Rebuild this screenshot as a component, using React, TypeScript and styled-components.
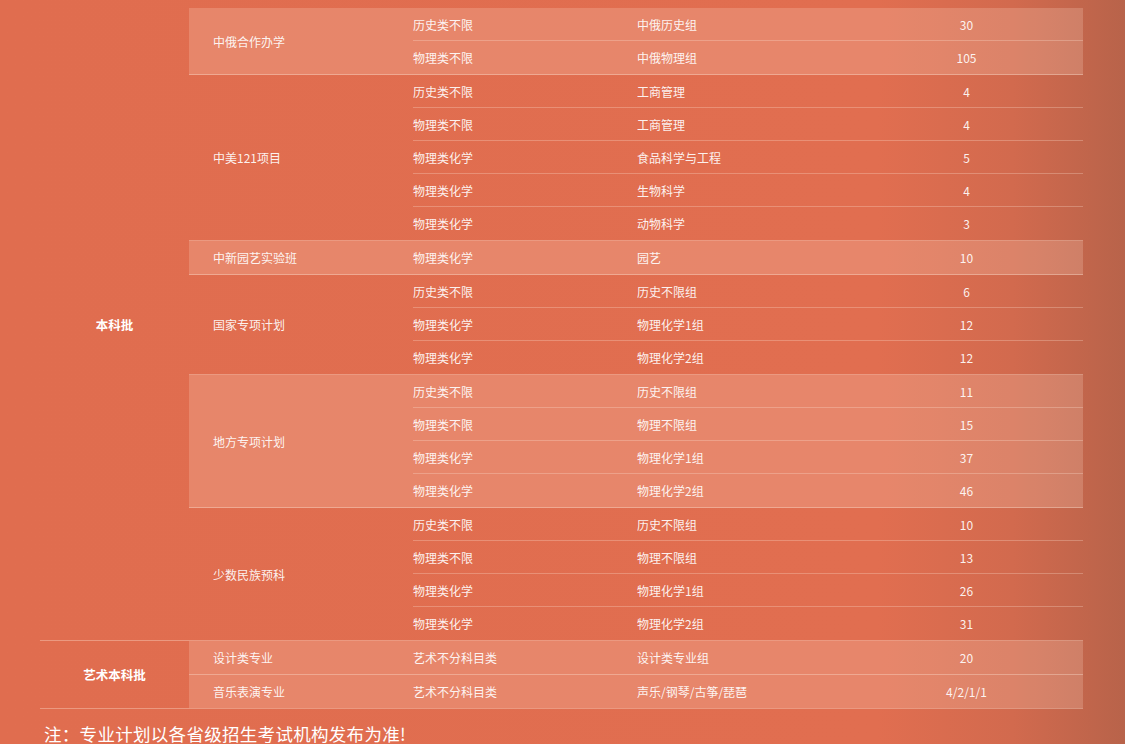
import React from 'react';
import styled, { createGlobalStyle } from 'styled-components';

const GlobalStyle = createGlobalStyle`
  html, body {
    margin: 0;
    height: 744px;
    overflow: hidden;
    background: linear-gradient(90deg, #e06d4f 0%, #e16e50 78%, #d26a4e 90%, #b8634a 100%);
    font-family: "Noto Sans CJK SC", "Noto Sans", sans-serif;
  }
`;

const Page = styled.div`
  padding: 8px 42px 0 40px;
`;

const Table = styled.div`
  width: 1043px;
`;

const Batch = styled.div`
  display: flex;
  border-bottom: 1px solid rgba(255, 235, 220, 0.35);
`;

const BatchLabel = styled.div`
  width: 149px;
  flex-shrink: 0;
  display: flex;
  align-items: center;
  justify-content: center;
  color: #fff;
  font-weight: 700;
  font-size: 12.5px;
`;

const Groups = styled.div`
  flex: 1;
  display: flex;
  flex-direction: column;
`;

const Group = styled.div<{ $hl?: boolean; $last?: boolean }>`
  display: flex;
  background: ${(p) => (p.$hl ? 'rgba(255, 225, 205, 0.22)' : 'transparent')};
  border-bottom: ${(p) => (p.$last ? 'none' : '1px solid rgba(255, 235, 220, 0.35)')};
`;

const Category = styled.div`
  width: 224px;
  flex-shrink: 0;
  padding-left: 24px;
  box-sizing: border-box;
  display: flex;
  align-items: center;
  color: rgba(255, 255, 255, 0.92);
  font-size: 12px;
`;

const Rows = styled.div`
  flex: 1;
  display: flex;
  flex-direction: column;
`;

const Row = styled.div<{ $last?: boolean }>`
  display: flex;
  height: ${(p) => (p.$last ? '33px' : '32px')};
  align-items: center;
  border-bottom: ${(p) => (p.$last ? 'none' : '1px solid rgba(255, 235, 220, 0.28)')};
  color: rgba(255, 255, 255, 0.92);
  font-size: 12px;
`;

const Cell = styled.div<{ $w: number; $center?: boolean }>`
  width: ${(p) => p.$w}px;
  flex-shrink: 0;
  text-align: ${(p) => (p.$center ? 'center' : 'left')};
`;

const Note = styled.div`
  margin-top: 12px;
  padding-left: 4px;
  color: #fff;
  font-size: 17.5px;
  letter-spacing: 0.3px;
`;

type R = [string, string, string];
type G = { name: string; hl?: boolean; rows: R[] };
type B = { label: string; groups: G[] };

const data: B[] = [
  {
    label: '本科批',
    groups: [
      { name: '中俄合作办学', hl: true, rows: [['历史类不限', '中俄历史组', '30'], ['物理类不限', '中俄物理组', '105']] },
      {
        name: '中美121项目',
        rows: [
          ['历史类不限', '工商管理', '4'],
          ['物理类不限', '工商管理', '4'],
          ['物理类化学', '食品科学与工程', '5'],
          ['物理类化学', '生物科学', '4'],
          ['物理类化学', '动物科学', '3'],
        ],
      },
      { name: '中新园艺实验班', hl: true, rows: [['物理类化学', '园艺', '10']] },
      {
        name: '国家专项计划',
        rows: [
          ['历史类不限', '历史不限组', '6'],
          ['物理类化学', '物理化学1组', '12'],
          ['物理类化学', '物理化学2组', '12'],
        ],
      },
      {
        name: '地方专项计划',
        hl: true,
        rows: [
          ['历史类不限', '历史不限组', '11'],
          ['物理类不限', '物理不限组', '15'],
          ['物理类化学', '物理化学1组', '37'],
          ['物理类化学', '物理化学2组', '46'],
        ],
      },
      {
        name: '少数民族预科',
        rows: [
          ['历史类不限', '历史不限组', '10'],
          ['物理类不限', '物理不限组', '13'],
          ['物理类化学', '物理化学1组', '26'],
          ['物理类化学', '物理化学2组', '31'],
        ],
      },
    ],
  },
  {
    label: '艺术本科批',
    groups: [
      { name: '设计类专业', hl: true, rows: [['艺术不分科目类', '设计类专业组', '20']] },
      { name: '音乐表演专业', hl: true, rows: [['艺术不分科目类', '声乐/钢琴/古筝/琵琶', '4/2/1/1']] },
    ],
  },
];

export default function App() {
  return (
    <Page>
      <GlobalStyle />
      <Table>
        {data.map((b) => (
          <Batch key={b.label}>
            <BatchLabel>{b.label}</BatchLabel>
            <Groups>
              {b.groups.map((g, gi) => (
                <Group key={g.name} $hl={g.hl} $last={gi === b.groups.length - 1}>
                  <Category>{g.name}</Category>
                  <Rows>
                    {g.rows.map((r, ri) => (
                      <Row key={ri} $last={ri === g.rows.length - 1}>
                        <Cell $w={224}>{r[0]}</Cell>
                        <Cell $w={213}>{r[1]}</Cell>
                        <Cell $w={233} $center>{r[2]}</Cell>
                      </Row>
                    ))}
                  </Rows>
                </Group>
              ))}
            </Groups>
          </Batch>
        ))}
      </Table>
      <Note>注：专业计划以各省级招生考试机构发布为准!</Note>
    </Page>
  );
}
